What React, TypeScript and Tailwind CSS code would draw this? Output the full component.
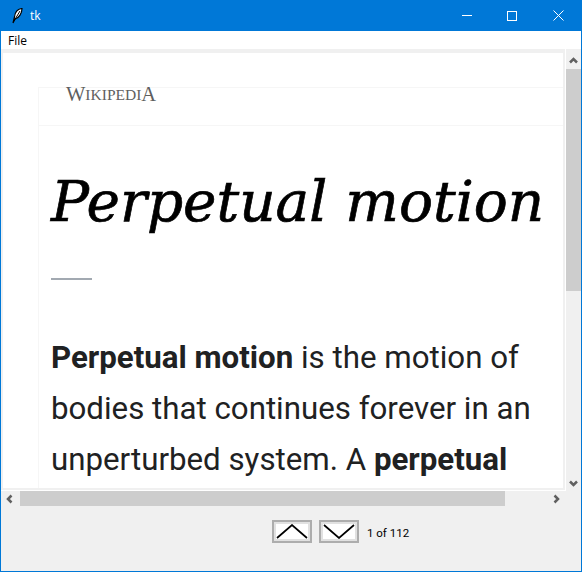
const Chevron = ({ d }: { d: string }) => (
  <svg width="10" height="10" viewBox="0 0 10 10" className="shrink-0">
    <path d={d} fill="none" stroke="#606060" strokeWidth="2.5" />
  </svg>
);

const Feather = () => (
  <svg width="16" height="16" viewBox="0 0 16 16">
    <path d="M13 0.5C9 1 6 4 5.5 9L4 15L6 11C10 10 13 5 13 0.5Z" fill="#fff" stroke="#000" strokeWidth="1.2" />
    <path d="M11 3L5 13" stroke="#000" strokeWidth="1" />
  </svg>
);

const NavButton = ({ d }: { d: string }) => (
  <button className="flex h-[23px] w-[40px] items-center justify-center border-2 border-[#adadad] bg-[#e1e1e1]">
    <span className="flex h-[15px] w-[32px] bg-white">
      <svg width="32" height="15" viewBox="0 0 32 15">
        <path d={d} fill="none" stroke="#000" strokeWidth="1.7" />
      </svg>
    </span>
  </button>
);

export default function App() {
  return (
    <div className="flex h-[572px] w-[582px] flex-col overflow-hidden border-x border-b border-[#0078d7] bg-[#f0f0f0] font-['Liberation_Sans',sans-serif]">
      <div className="-mx-px flex h-[31px] shrink-0 items-center bg-[#0078d7] text-white">
        <div className="ml-[9px] flex w-[21px]">
          <Feather />
        </div>
        <span className="font-['Open_Sans',sans-serif] text-xs">tk</span>
        <div className="mr-px ml-auto flex items-center">
          <div className="flex h-[31px] w-[45px] items-center justify-center">
            <div className="h-px w-[10px] bg-white" />
          </div>
          <div className="flex h-[31px] w-[46px] items-center justify-center">
            <div className="size-[10px] border border-white" />
          </div>
          <div className="flex h-[31px] w-[46px] items-center justify-center">
            <svg width="11" height="11" viewBox="0 0 11 11">
              <path d="M0.5 0.5L10.5 10.5M10.5 0.5L0.5 10.5" stroke="#fff" />
            </svg>
          </div>
        </div>
      </div>

      <div className="flex h-[18px] shrink-0 items-center bg-white pt-[2px] pl-[7px] font-['Open_Sans',sans-serif] text-xs text-black">
        File
      </div>

      <div className="flex h-[442px] shrink-0">
        <div className="w-[565px] border-r border-b border-white pt-[4px] pl-[2px]">
          <div className="h-[435px] w-[560px] overflow-hidden bg-white pt-[34px] pl-[35px]">
            <div className="h-[401px] border-l border-[#f6f6f6]">
              <div className="flex h-[39px] items-start border-y border-[#f6f6f6] pl-[27px] font-['Liberation_Serif',serif] leading-none text-[#5f5f5f]">
                <span className="text-[20.5px] leading-[13px]">W</span>
                <span className="text-[15.5px] leading-[14px]">IKIPEDI</span>
                <span className="text-[20.5px] leading-[13px]">A</span>
              </div>
              <div className="pl-[12px]">
                <h1 className="mt-[36px] font-['DejaVu_Serif',serif] text-[56.5px] leading-[80px] whitespace-nowrap text-black italic [-webkit-text-stroke:0.7px_black]">
                  Perpetual motion
                </h1>
                <div className="mt-[36px] h-[2px] w-[41px] bg-[#a2a9b1]" />
                <p className="mt-[52px] w-[500px] font-['Roboto',sans-serif] text-[31.25px] leading-[51px] text-[#202122]">
                  <b>Perpetual motion</b> is the motion of bodies that continues forever in an unperturbed system. A{" "}
                  <b>perpetual</b>
                </p>
              </div>
            </div>
          </div>
        </div>
        <div className="flex w-[15px] flex-col pt-[4px]">
          <div className="flex h-[16px] items-center pl-[3px]">
            <Chevron d="M1 6.5L4.5 3L8 6.5" />
          </div>
          <div className="h-[222px] bg-[#cdcdcd]" />
          <div className="flex-1" />
          <div className="flex h-[16px] items-center pl-[3px]">
            <Chevron d="M1 3.5L4.5 7L8 3.5" />
          </div>
        </div>
      </div>

      <div className="flex h-[15px] shrink-0 items-center">
        <div className="flex w-[19px] items-center pl-[3px]">
          <Chevron d="M7.5 1.5L4 5L7.5 8.5" />
        </div>
        <div className="h-[15px] w-[485px] bg-[#cdcdcd]" />
        <div className="ml-[47px] flex items-center">
          <Chevron d="M2.5 1.5L6 5L2.5 8.5" />
        </div>
      </div>

      <div className="flex flex-1 items-start pt-[14px] pl-[271px]">
        <NavButton d="M1 14L16 1L31 14" />
        <div className="ml-[7px]">
          <NavButton d="M1 1L16 14L31 1" />
        </div>
        <span className="mt-px ml-[8px] font-['Roboto',sans-serif] text-[11.5px] leading-[24px] text-black">1 of 112</span>
      </div>
    </div>
  );
}
